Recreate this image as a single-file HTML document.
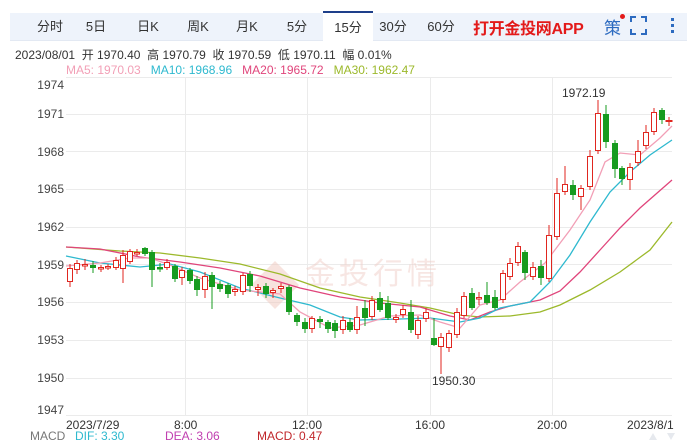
<!DOCTYPE html>
<html><head><meta charset="utf-8">
<style>
body{margin:0;width:690px;height:442px;background:#fff;font-family:"Liberation Sans","Noto Sans CJK SC",sans-serif;overflow:hidden;position:relative}
.bar{position:absolute;left:10px;top:13px;width:677px;height:27px;background:#eef3fb;border-bottom:1px solid #e3e9f3}
.t{position:absolute;top:13px;height:27px;line-height:27px;font-size:13px;color:#333;text-align:center}
.act{background:#fff;border-top:2px solid #1e3f8a;top:11px;height:29px;line-height:29px}
.abs{position:absolute;white-space:nowrap;font-size:12px}
</style></head><body>
<div class="bar"></div>
<div class="t" style="left:35px;width:30px">分时</div>
<div class="t" style="left:83px;width:26px">5日</div>
<div class="t" style="left:134px;width:28px">日K</div>
<div class="t" style="left:184px;width:28px">周K</div>
<div class="t" style="left:233px;width:28px">月K</div>
<div class="t" style="left:283px;width:28px">5分</div>
<div class="t act" style="left:323px;width:50px">15分</div>
<div class="t" style="left:378px;width:30px">30分</div>
<div class="t" style="left:426px;width:30px">60分</div>
<div class="abs" style="left:473px;top:15px;font-size:16px;font-weight:bold;color:#e31a1a;letter-spacing:-0.3px">打开金投网APP</div>
<div class="abs" style="left:604px;top:14px;font-size:17px;color:#2d6bc0">策</div>
<div style="position:absolute;left:620px;top:14px;width:5px;height:5px;border-radius:50%;background:#e31a1a"></div>
<svg style="position:absolute;left:630px;top:16px" width="60" height="20"><g stroke="#2d6bc0" stroke-width="2" fill="none"><path d="M1 6V1h5M11 1h5v5M16 13v5h-5M6 18H1v-5"/></g><g fill="#2d6bc0"><rect x="41" y="2" width="3" height="3"/><rect x="41" y="8" width="3" height="3"/><rect x="41" y="14" width="3" height="3"/></g></svg>
<div class="abs" style="left:15px;top:46px;color:#333">2023/08/01&nbsp; 开 1970.40&nbsp; 高 1970.79&nbsp; 收 1970.59&nbsp; 低 1970.11&nbsp; 幅 0.01%</div>
<div class="abs" style="left:66px;top:63px"><span style="color:#f29fb6">MA5: 1970.03</span>&nbsp;&nbsp;&nbsp;<span style="color:#2eb9cf">MA10: 1968.96</span>&nbsp;&nbsp;&nbsp;<span style="color:#e0457b">MA20: 1965.72</span>&nbsp;&nbsp;&nbsp;<span style="color:#9cb92b">MA30: 1962.47</span></div>
<svg style="position:absolute;left:0;top:0" width="690" height="442" font-family="Liberation Sans, sans-serif" font-size="12">
<g stroke="#ebebeb" stroke-width="1">
<line x1="66" y1="77.5" x2="672" y2="77.5"/><line x1="66" y1="114.5" x2="672" y2="114.5"/><line x1="66" y1="151.5" x2="672" y2="151.5"/><line x1="66" y1="189.5" x2="672" y2="189.5"/><line x1="66" y1="227.5" x2="672" y2="227.5"/><line x1="66" y1="264.5" x2="672" y2="264.5"/><line x1="66" y1="302.5" x2="672" y2="302.5"/><line x1="66" y1="340.5" x2="672" y2="340.5"/><line x1="66" y1="378.5" x2="672" y2="378.5"/><line x1="66" y1="415.5" x2="672" y2="415.5"/>
<line x1="185.5" y1="77" x2="185.5" y2="415"/><line x1="307.5" y1="77" x2="307.5" y2="415"/><line x1="430.5" y1="77" x2="430.5" y2="415"/><line x1="552.5" y1="77" x2="552.5" y2="415"/>
</g>
<g fill="#444" text-anchor="end">
<text x="64" y="89">1974</text><text x="64" y="118">1971</text><text x="64" y="156">1968</text><text x="64" y="193">1965</text><text x="64" y="231">1962</text><text x="64" y="269">1959</text><text x="64" y="306">1956</text><text x="64" y="344">1953</text><text x="64" y="382">1950</text><text x="64" y="414">1947</text>
</g>
<g opacity="0.5">
<rect x="258" y="268" width="34" height="34" transform="rotate(45 275 285)" fill="#f0c8bf"/>
<text x="305" y="284" font-size="30" fill="#f0cfc8" font-family="Noto Sans CJK SC, sans-serif" letter-spacing="4">金投行情</text>
</g>
<g fill="none" stroke-width="1.3">
<polyline stroke="#9cb92b" points="66,247 120,251 160,253 200,258 240,264 280,274 320,288 360,297 400,303 430,308 460,315 480,317 510,316 540,312 560,305 590,290 620,272 650,250 672,222"/>
<polyline stroke="#e0457b" points="66,247 100,249 140,257 180,262 220,268 260,276 300,288 340,297 380,303 420,307 450,316 470,320 490,312 510,306 540,300 560,291 580,272 600,250 620,228 640,208 672,180"/>
<polyline stroke="#2eb9cf" points="66,256 100,263 140,267 170,264 200,272 240,288 280,298 310,305 340,317 360,320 400,319 430,318 460,322 480,318 500,308 530,302 550,282 570,255 590,222 610,192 630,172 650,155 672,140"/>
<polyline stroke="#f29fb6" points="66,266 100,263 130,258 150,258 170,265 200,278 240,290 280,294 300,312 330,328 360,325 390,316 420,315 440,322 460,328 480,305 500,300 520,282 545,263 570,230 590,200 605,162 620,153 640,155 660,138 672,126"/>
</g>
<g id="c" stroke-width="1">
<!-- red: hollow -->
<g stroke="#e0261f" fill="#fff">
<path d="M70 264V287M77 260V274M85 259V270M101 265V272M108 264V270M116 257V270M123 250V283M130 249V264M137 249V256M167 259V270M182 267V285M205 272V298M235 286V296M243 273V295M258 284V296M273 288V298M281 283V293M312 316V333M343 316V334M357 306V334M372 296V320M396 314V323M403 305V318M418 316V339M426 308V322M441 333V374M449 330V352M457 308V338M464 292V318M479 292V305M503 270V303M510 258V280M518 242V266M533 262V280M549 225V282M557 178V240M565 166V195M581 185V210M590 150V190M598 100V154M630 163V190M638 140V166M646 125V149M654 108V135M669 117V126"/>
<rect x="67.5" y="268.5" width="5" height="13"/><rect x="74.5" y="263.5" width="5" height="6"/><rect x="82.5" y="264.5" width="5" height="1.5"/><rect x="98.5" y="267.5" width="5" height="1.5"/><rect x="105.5" y="266.5" width="5" height="1.5"/><rect x="113.5" y="260.5" width="5" height="7"/><rect x="120.5" y="255.5" width="5" height="13"/><rect x="127.5" y="251.5" width="5" height="10"/><rect x="134.5" y="252.5" width="5" height="1.5"/><rect x="164.5" y="262.5" width="5" height="5"/><rect x="179.5" y="270.5" width="5" height="7"/><rect x="202.5" y="276.5" width="5" height="13"/><rect x="232.5" y="289.5" width="5" height="2"/><rect x="240.5" y="275.5" width="5" height="16"/><rect x="255.5" y="287.5" width="5" height="2"/><rect x="270.5" y="290.5" width="5" height="2"/><rect x="278.5" y="286.5" width="5" height="2"/><rect x="309.5" y="318.5" width="5" height="10"/><rect x="340.5" y="320.5" width="5" height="9"/><rect x="354.5" y="317.5" width="5" height="12"/><rect x="369.5" y="300.5" width="5" height="16"/><rect x="393.5" y="317.5" width="5" height="2"/><rect x="400.5" y="309.5" width="5" height="5"/><rect x="415.5" y="320.5" width="5" height="14"/><rect x="423.5" y="312.5" width="5" height="6"/><rect x="438.5" y="337.5" width="5" height="9"/><rect x="446.5" y="333.5" width="5" height="14"/><rect x="454.5" y="312.5" width="5" height="22"/><rect x="461.5" y="296.5" width="5" height="19"/><rect x="476.5" y="297.5" width="5" height="1.5"/><rect x="500.5" y="273.5" width="5" height="26"/><rect x="507.5" y="263.5" width="5" height="13"/><rect x="515.5" y="246.5" width="5" height="16"/><rect x="530.5" y="267.5" width="5" height="9"/><rect x="546.5" y="235.5" width="5" height="43"/><rect x="554.5" y="193.5" width="5" height="43"/><rect x="562.5" y="184.5" width="5" height="7"/><rect x="578.5" y="188.5" width="5" height="8"/><rect x="587.5" y="156.5" width="5" height="30"/><rect x="595.5" y="113.5" width="5" height="37"/><rect x="627.5" y="167.5" width="5" height="12"/><rect x="635.5" y="151.5" width="5" height="11"/><rect x="643.5" y="132.5" width="5" height="13"/><rect x="651.5" y="112.5" width="5" height="19"/><rect x="666" y="120.5" width="6" height="1"/>
</g>
<g stroke="#179b1f" fill="#179b1f">
<path d="M93 261V273M145 247V256M152 250V287M160 263V272M175 264V282M190 268V284M197 276V296M212 272V309M220 281V292M228 283V298M250 271V292M266 283V298M289 285V315M297 313V326M305 318V333M320 316V328M328 320V333M335 320V338M350 318V332M365 300V326M380 292V312M388 296V320M411 300V333M434 318V346M472 288V310M487 282V305M495 290V310M525 250V280M541 260V285M573 180V200M606 105V148M615 140V178M622 166V185M662 108V124"/>
<rect x="90.5" y="265.5" width="5" height="2"/><rect x="142.5" y="248.5" width="5" height="5"/><rect x="149.5" y="252.5" width="5" height="17"/><rect x="157.5" y="267.5" width="5" height="1.5"/><rect x="172.5" y="266.5" width="5" height="12"/><rect x="187.5" y="270.5" width="5" height="10"/><rect x="194.5" y="279.5" width="5" height="10"/><rect x="209.5" y="275.5" width="5" height="11"/><rect x="217.5" y="284.5" width="5" height="4"/><rect x="225.5" y="285.5" width="5" height="8"/><rect x="247.5" y="274.5" width="5" height="11"/><rect x="263.5" y="286.5" width="5" height="7"/><rect x="286.5" y="287.5" width="5" height="24"/><rect x="294.5" y="315.5" width="5" height="6"/><rect x="302.5" y="322.5" width="5" height="6"/><rect x="317.5" y="319.5" width="5" height="2"/><rect x="325.5" y="322.5" width="5" height="6"/><rect x="332.5" y="323.5" width="5" height="7"/><rect x="347.5" y="322.5" width="5" height="7"/><rect x="362.5" y="308.5" width="5" height="9"/><rect x="377.5" y="298.5" width="5" height="11"/><rect x="385.5" y="303.5" width="5" height="14"/><rect x="408.5" y="312.5" width="5" height="17"/><rect x="431.5" y="338.5" width="5" height="6"/><rect x="469.5" y="293.5" width="5" height="14"/><rect x="484.5" y="295.5" width="5" height="7"/><rect x="492.5" y="297.5" width="5" height="10"/><rect x="522.5" y="252.5" width="5" height="20"/><rect x="538.5" y="266.5" width="5" height="11"/><rect x="570.5" y="185.5" width="5" height="9"/><rect x="603.5" y="114.5" width="5" height="27"/><rect x="612.5" y="143.5" width="5" height="25"/><rect x="619.5" y="168.5" width="5" height="10"/><rect x="659.5" y="110.5" width="5" height="9"/>
</g>
</g>
<text x="562" y="97" fill="#333">1972.19</text>
<text x="432" y="385" fill="#333">1950.30</text>
<g fill="#333">
<text x="66" y="429">2023/7/29</text><text x="174" y="429">8:00</text><text x="292" y="429">12:00</text><text x="415" y="429">16:00</text><text x="537" y="429">20:00</text><text x="627" y="429">2023/8/1</text>
</g>
<text x="30" y="440" fill="#777">MACD</text>
<text x="75" y="440" fill="#2eb9cf">DIF: 3.30</text>
<text x="165" y="440" fill="#c03fb0">DEA: 3.06</text>
<text x="257" y="440" fill="#c0262a">MACD: 0.47</text>
<g fill="#e6e9ee"><path d="M649 440l4-7 4 7z"/><path d="M667 433l4 7 4-7z"/></g>
</svg>
</body></html>
